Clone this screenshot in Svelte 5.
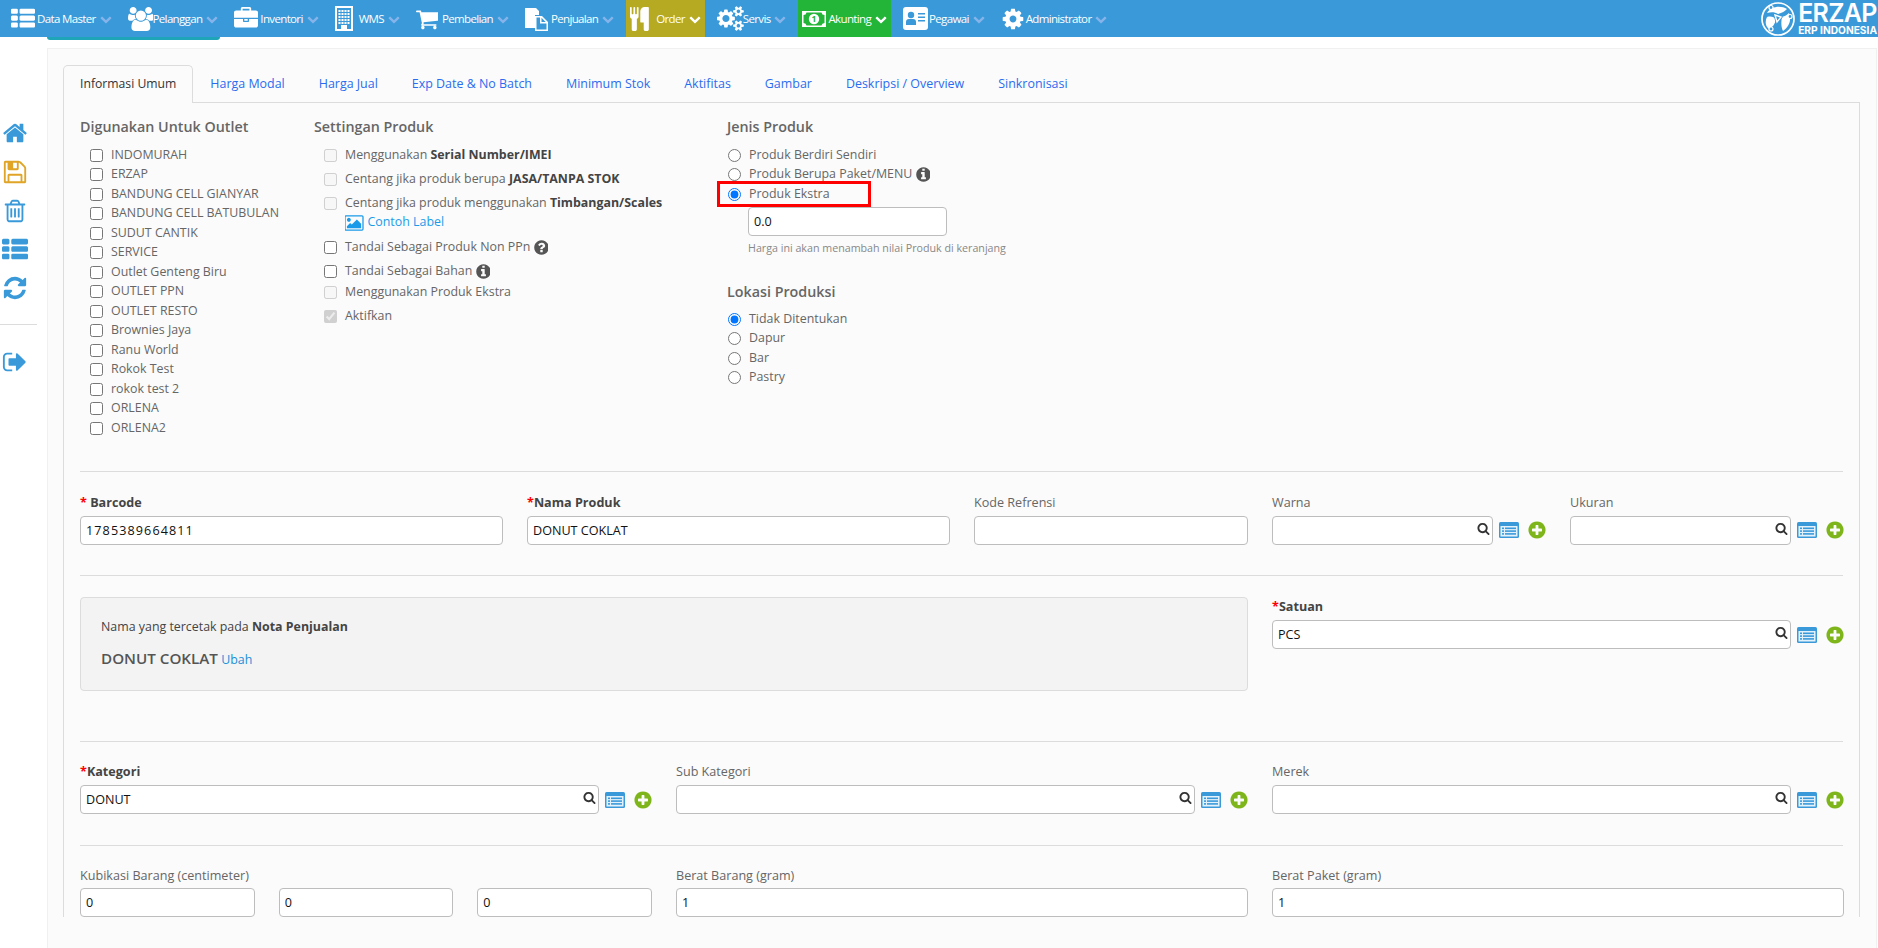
<script>
  const P = {
    users: ['0 0 1920 1792','M593 896q-162 5-265 128h-134q-82 0-138-40.5t-56-118.5q0-353 124-353 6 0 43.5 21t97.5 42.5 119 21.5q67 0 133-23-5 37-5 66 0 139 81 256zm1071 637q0 120-73 189.5t-194 69.5h-874q-121 0-194-69.5t-73-189.5q0-53 3.5-103.5t14-109 26.5-108.5 43-97.5 62-81 85.5-53.5 111.5-20q10 0 43 21.5t73 48 107 48 135 21.5 135-21.5 107-48 73-48 43-21.5q61 0 111.5 20t85.5 53.5 62 81 43 97.5 26.5 108.5 14 109 3.5 103.5zm-1024-1277q0 106-75 181t-181 75-181-75-75-181 75-181 181-75 181 75 75 181zm704 384q0 159-112.5 271.5t-271.5 112.5-271.5-112.5-112.5-271.5 112.5-271.5 271.5-112.5 271.5 112.5 112.5 271.5zm576 225q0 78-56 118.5t-138 40.5h-134q-103-123-265-128 81-117 81-256 0-29-5-66 66 23 133 23 59 0 119-21.5t97.5-42.5 43.5-21q124 0 124 353zm-128-609q0 106-75 181t-181 75-181-75-75-181 75-181 181-75 181 75 75 181z'],
    briefcase: ['0 0 1792 1792','M640 256h512v-128h-512v128zm1152 640v480q0 66-47 113t-113 47h-1472q-66 0-113-47t-47-113v-480h672v160q0 26 19 45t45 19h320q26 0 45-19t19-45v-160h672zm-768 0v128h-256v-128h256zm768-480v384h-1792v-384q0-66 47-113t113-47h352v-160q0-40 28-68t68-28h576q40 0 68 28t28 68v160h352q66 0 113 47t47 113z'],
    cart: ['0 0 1664 1792','M640 1536q0 52-38 90t-90 38-90-38-38-90 38-90 90-38 90 38 38 90zm896 0q0 52-38 90t-90 38-90-38-38-90 38-90 90-38 90 38 38 90zm128-1088v512q0 24-16.5 42.5t-40.5 21.5l-1044 122q13 60 13 70 0 16-24 64h920q26 0 45 19t19 45-19 45-45 19h-1024q-26 0-45-19t-19-45q0-11 8-31.5t16-36 21.5-40 15.5-29.5l-177-823h-204q-26 0-45-19t-19-45 19-45 45-19h256q16 0 28.5 6.5t19.5 15.5 13 24.5 8 26 5.5 29.5 4.5 26h1201q26 0 45 19t19 45z'],
    cutlery: ['0 0 1408 1792','M640 64v640q0 61-35.5 111t-92.5 70v779q0 52-38 90t-90 38h-128q-52 0-90-38t-38-90v-779q-57-20-92.5-70t-35.5-111v-640q0-26 19-45t45-19 45 19 19 45v416q0 26 19 45t45 19 45-19 19-45v-416q0-26 19-45t45-19 45 19 19 45v416q0 26 19 45t45 19 45-19 19-45v-416q0-26 19-45t45-19 45 19 19 45zm768 0v1600q0 52-38 90t-90 38h-128q-52 0-90-38t-38-90v-512h-224q-13 0-22.5-9.5t-9.5-22.5v-800q0-132 94-226t226-94h256q26 0 45 19t19 45z'],
    cogs: ['0 0 1920 1792','M896 896q0-106-75-181t-181-75-181 75-75 181 75 181 181 75 181-75 75-181zm768 512q0-52-38-90t-90-38-90 38-38 90q0 53 37.5 90.5t90.5 37.5 90.5-37.5 37.5-90.5zm0-1024q0-52-38-90t-90-38-90 38-38 90q0 53 37.5 90.5t90.5 37.5 90.5-37.5 37.5-90.5zm-384 421v185q0 10-7 19.5t-16 10.5l-155 24q-11 35-32 76 34 48 90 115 7 11 7 20 0 12-7 19-23 30-82.5 89.5t-78.5 59.5q-11 0-21-7l-115-90q-37 19-77 31-11 108-23 155-7 24-30 24h-186q-11 0-20-7.5t-10-17.5l-23-153q-34-10-75-31l-118 89q-7 7-20 7-11 0-21-8-144-133-144-160 0-9 7-19 10-14 41-53t47-61q-23-44-35-82l-152-24q-10-1-17-9.5t-7-19.5v-185q0-10 7-19.5t16-10.5l155-24q11-35 32-76-34-48-90-115-7-11-7-20 0-12 7-20 22-30 82-89t79-59q11 0 21 7l115 90q34-18 77-32 11-108 23-154 7-24 30-24h186q11 0 20 7.5t10 17.5l23 153q34 10 75 31l118-89q8-7 20-7 11 0 21 8 144 133 144 160 0 8-7 19-12 16-42 54t-45 60q23 48 34 82l152 23q10 2 17 10.5t7 19.5zm640 533v140q0 16-149 31-12 27-30 52 51 113 51 138 0 4-4 7-122 71-124 71-8 0-46-47t-52-68q-20 2-30 2t-30-2q-14 21-52 68t-46 47q-2 0-124-71-4-3-4-7 0-25 51-138-18-25-30-52-149-15-149-31v-140q0-16 149-31 13-29 30-52-51-113-51-138 0-4 4-7 4-2 35-20t59-34 30-16q8 0 46 46.5t52 67.5q20-2 30-2t30 2q51-71 92-112l6-2q4 0 124 70 4 3 4 7 0 25-51 138 17 23 30 52 149 15 149 31zm0-1024v140q0 16-149 31-12 27-30 52 51 113 51 138 0 4-4 7-122 71-124 71-8 0-46-47t-52-68q-20 2-30 2t-30-2q-14 21-52 68t-46 47q-2 0-124-71-4-3-4-7 0-25 51-138-18-25-30-52-149-15-149-31v-140q0-16 149-31 13-29 30-52-51-113-51-138 0-4 4-7 4-2 35-20t59-34 30-16q8 0 46 46.5t52 67.5q20-2 30-2t30 2q51-71 92-112l6-2q4 0 124 70 4 3 4 7 0 25-51 138 17 23 30 52 149 15 149 31z'],
    cog: ['0 0 1792 1792','M1152 896q0-106-75-181t-181-75-181 75-75 181 75 181 181 75 181-75 75-181zm512-109v222q0 12-8 23t-20 13l-185 28q-19 54-39 91 35 50 107 138 10 12 10 25t-9 23q-27 37-99 108t-94 71q-12 0-26-9l-138-108q-44 23-91 38-16 136-29 186-7 28-36 28h-222q-14 0-24.5-8.5t-11.5-21.5l-28-184q-49-16-90-37l-141 107q-10 9-25 9-14 0-25-11-126-114-165-168-7-10-7-23 0-12 8-23 15-21 51-66.5t54-70.5q-27-50-41-99l-183-27q-13-2-21-12.5t-8-23.5v-222q0-12 8-23t19-13l186-28q14-46 39-92-40-57-107-138-10-12-10-24 0-10 9-23 26-36 98.5-107.5t94.5-71.5q13 0 26 10l138 107q44-23 91-38 16-136 29-186 7-28 36-28h222q14 0 24.5 8.5t11.5 21.5l28 184q49 16 90 37l142-107q9-9 24-9 13 0 25 10 129 119 165 170 7 8 7 22 0 12-8 23-15 21-51 66.5t-54 70.5q26 50 41 98l183 28q13 2 21 12.5t8 23.5z'],
    chevron: ['0 0 1792 1792','M1683 808l-742 741q-19 19-45 19t-45-19l-742-741q-19-19-19-45.5t19-45.5l166-165q19-19 45-19t45 19l531 531 531-531q19-19 45-19t45 19l166 165q19 19 19 45.5t-19 45.5z'],
    home: ['0 0 1792 1792','M1472 992v480q0 26-19 45t-45 19h-384v-384h-256v384h-384q-26 0-45-19t-19-45v-480q0-1 .5-3t.5-3l575-474 575 474q1 2 1 6zm223-69l-62 74q-8 9-21 11h-3q-13 0-21-7l-692-577-692 577q-12 8-24 7-13-2-21-11l-62-74q-8-10-7-23.5t11-21.5l719-599q32-26 76-26t76 26l244 204v-195q0-14 9-23t23-9h192q14 0 23 9t9 23v408l219 182q10 8 11 21.5t-7 23.5z'],
    save: ['0 0 1792 1792','M512 1536h768v-384h-768v384zm896 0h128v-896q0-14-10-38.5t-20-34.5l-281-281q-10-10-34-20t-39-10v416q0 40-28 68t-68 28h-576q-40 0-68-28t-28-68v-416h-128v1280h128v-416q0-40 28-68t68-28h832q40 0 68 28t28 68v416zm-384-928v-320q0-13-9.5-22.5t-22.5-9.5h-192q-13 0-22.5 9.5t-9.5 22.5v320q0 13 9.5 22.5t22.5 9.5h192q13 0 22.5-9.5t9.5-22.5zm640 32v928q0 40-28 68t-68 28h-1344q-40 0-68-28t-28-68v-1344q0-40 28-68t68-28h928q40 0 88 20t76 48l280 280q28 28 48 76t20 88z'],
    trash: ['0 0 1792 1792','M704 736v576q0 14-9 23t-23 9h-64q-14 0-23-9t-9-23v-576q0-14 9-23t23-9h64q14 0 23 9t9 23zm256 0v576q0 14-9 23t-23 9h-64q-14 0-23-9t-9-23v-576q0-14 9-23t23-9h64q14 0 23 9t9 23zm256 0v576q0 14-9 23t-23 9h-64q-14 0-23-9t-9-23v-576q0-14 9-23t23-9h64q14 0 23 9t9 23zm128 724v-948h-896v948q0 22 7 40.5t14.5 27 10.5 8.5h832q3 0 10.5-8.5t14.5-27 7-40.5zm-672-1076h448l-48-117q-7-9-17-11h-317q-10 2-17 11zm928 32v64q0 14-9 23t-23 9h-96v948q0 83-47 143.5t-113 60.5h-832q-66 0-113-58.5t-47-141.5v-952h-96q-14 0-23-9t-9-23v-64q0-14 9-23t23-9h309l70-167q15-37 54-63t79-26h320q40 0 79 26t54 63l70 167h309q14 0 23 9t9 23z'],
    thlist: ['0 0 1792 1792','M512 1248v192q0 40-28 68t-68 28h-320q-40 0-68-28t-28-68v-192q0-40 28-68t68-28h320q40 0 68 28t28 68zm0-512v192q0 40-28 68t-68 28h-320q-40 0-68-28t-28-68v-192q0-40 28-68t68-28h320q40 0 68 28t28 68zm1280 512v192q0 40-28 68t-68 28h-960q-40 0-68-28t-28-68v-192q0-40 28-68t68-28h960q40 0 68 28t28 68zm-1280-1024v192q0 40-28 68t-68 28h-320q-40 0-68-28t-28-68v-192q0-40 28-68t68-28h320q40 0 68 28t28 68zm1280 512v192q0 40-28 68t-68 28h-960q-40 0-68-28t-28-68v-192q0-40 28-68t68-28h960q40 0 68 28t28 68zm0-512v192q0 40-28 68t-68 28h-960q-40 0-68-28t-28-68v-192q0-40 28-68t68-28h960q40 0 68 28t28 68z'],
    refresh: ['0 0 1792 1792','M1639 1056q0 5-1 7-64 268-268 434.5t-478 166.5q-146 0-282.5-55t-243.5-157l-129 129q-19 19-45 19t-45-19-19-45v-448q0-26 19-45t45-19h448q26 0 45 19t19 45-19 45l-137 137q71 66 161 102t187 36q134 0 250-65t186-179q11-17 53-117 8-23 30-23h192q13 0 22.5 9.5t9.5 22.5zm25-800v448q0 26-19 45t-45 19h-448q-26 0-45-19t-19-45 19-45l138-138q-148-137-349-137-134 0-250 65t-186 179q-11 17-53 117-8 23-30 23h-199q-13 0-22.5-9.5t-9.5-22.5v-7q65-268 270-434.5t480-166.5q146 0 284 55.5t245 156.5l130-129q19-19 45-19t45 19 19 45z'],
    signout: ['0 0 1664 1792','M704 1440q0 4 1 20t.5 26.5-3 23.5-10 19.5-20.5 6.5h-320q-119 0-203.5-84.5t-84.5-203.5v-704q0-119 84.5-203.5t203.5-84.5h320q13 0 22.5 9.5t9.5 22.5q0 4 1 20t.5 26.5-3 23.5-10 19.5-20.5 6.5h-320q-66 0-113 47t-47 113v704q0 66 47 113t113 47h312l11.5 1 11.5 3 8 5.5 7 9 2 13.5zm928-544q0 26-19 45l-544 544q-19 19-45 19t-45-19-19-45v-288h-448q-26 0-45-19t-19-45v-384q0-26 19-45t45-19h448v-288q0-26 19-45t45-19 45 19l544 544q19 19 19 45z'],
    search: ['0 0 1792 1792','M1216 832q0-185-131.5-316.5t-316.5-131.5-316.5 131.5-131.5 316.5 131.5 316.5 316.5 131.5 316.5-131.5 131.5-316.5zm512 832q0 52-38 90t-90 38q-54 0-90-38l-343-342q-179 124-399 124-143 0-273.5-55.5t-225-150-150-225-55.5-273.5 55.5-273.5 150-225 225-150 273.5-55.5 273.5 55.5 225 150 150 225 55.5 273.5q0 220-124 399l343 343q37 37 37 90z'],
    plus: ['0 0 1664 1792','M1344 960v-128q0-26-19-45t-45-19h-256v-256q0-26-19-45t-45-19h-128q-26 0-45 19t-19 45v256h-256q-26 0-45 19t-19 45v128q0 26 19 45t45 19h256v256q0 26 19 45t45 19h128q26 0 45-19t19-45v-256h256q26 0 45-19t19-45zm320-64q0 209-103 385.5t-279.5 279.5-385.5 103-385.5-103-279.5-279.5-103-385.5 103-385.5 279.5-279.5 385.5-103 385.5 103 279.5 279.5 103 385.5z'],
    info: ['0 0 1664 1792','M1152 1376v-160q0-14-9-23t-23-9h-96v-512q0-14-9-23t-23-9h-320q-14 0-23 9t-9 23v160q0 14 9 23t23 9h96v320h-96q-14 0-23 9t-9 23v160q0 14 9 23t23 9h448q14 0 23-9t9-23zm-128-896v-160q0-14-9-23t-23-9h-192q-14 0-23 9t-9 23v160q0 14 9 23t23 9h192q14 0 23-9t9-23zm640 416q0 209-103 385.5t-279.5 279.5-385.5 103-385.5-103-279.5-279.5-103-385.5 103-385.5 279.5-279.5 385.5-103 385.5 103 279.5 279.5 103 385.5z'],
    question: ['0 0 1664 1792','M1024 1376v-192q0-14-9-23t-23-9h-192q-14 0-23 9t-9 23v192q0 14 9 23t23 9h192q14 0 23-9t9-23zm256-672q0-88-55.5-163t-138.5-116-170-41q-243 0-371 213-15 24 8 42l132 100q7 6 19 6 16 0 25-12 53-68 86-92 34-24 86-24 48 0 85.5 26t37.5 59q0 38-20 61t-68 45q-63 28-115.5 86.5t-52.5 125.5v36q0 14 9 23t23 9h192q14 0 23-9t9-23q0-19 21.5-49.5t54.5-49.5q32-18 49-28.5t46-35 44.5-48 28-60.5 12.5-81zm384 192q0 209-103 385.5t-279.5 279.5-385.5 103-385.5-103-279.5-279.5-103-385.5 103-385.5 279.5-279.5 385.5-103 385.5 103 279.5 279.5 103 385.5z'],
    picture: ['0 0 1920 1792','M576 576q0 80-56 136t-136 56-136-56-56-136 56-136 136-56 136 56 56 136zm1024 384v448h-1408v-192l320-320 160 160 512-512zm96-704h-1600q-13 0-22.5 9.5t-9.5 22.5v1216q0 13 9.5 22.5t22.5 9.5h1600q13 0 22.5-9.5t9.5-22.5v-1216q0-13-9.5-22.5t-22.5-9.5zm160 32v1216q0 66-47 113t-113 47h-1600q-66 0-113-47t-47-113v-1216q0-66 47-113t113-47h1600q66 0 113 47t47 113z']
  };

  const nav = [
    { t:'Data Master', i:'thlist', w:26, s:24 },
    { t:'Pelanggan', i:'users', w:25, s:24 },
    { t:'Inventori', i:'briefcase', w:26, s:24 },
    { t:'WMS', i:'wms', w:24, s:24 },
    { t:'Pembelian', i:'cart', w:26, s:24 },
    { t:'Penjualan', i:'file', w:26, s:24 },
    { t:'Order', i:'cutlery', w:26, s:24, cls:'order' },
    { t:'Servis', i:'cogs', w:26, s:25 },
    { t:'Akunting', i:'money', w:26, s:24, cls:'akun' },
    { t:'Pegawai', i:'vcard', w:26, s:24 },
    { t:'Administrator', i:'cog', w:25, s:24 }
  ];
  const tabs = ['Harga Modal','Harga Jual','Exp Date & No Batch','Minimum Stok','Aktifitas','Gambar','Deskripsi / Overview','Sinkronisasi'];
  const outlets = ['INDOMURAH','ERZAP','BANDUNG CELL GIANYAR','BANDUNG CELL BATUBULAN','SUDUT CANTIK','SERVICE','Outlet Genteng Biru','OUTLET PPN','OUTLET RESTO','Brownies Jaya','Ranu World','Rokok Test','rokok test 2','ORLENA','ORLENA2'];
  const lokasi = ['Tidak Ditentukan','Dapur','Bar','Pastry'];
  const side = [['home','blue'],['save','amber'],['trash','blue'],['thlist','blue'],['refresh','blue']];
</script>

{#snippet fa(name, size, cls = '')}
  <svg class={cls} width={size * P[name][0].split(' ')[2] / 1792} height={size} viewBox={P[name][0]} fill="currentColor" aria-hidden="true"><path d={P[name][1]} /></svg>
{/snippet}

{#snippet addons()}
  <svg class="tbl" width="20" height="16" viewBox="0 0 20 16" aria-hidden="true">
    <rect x="0" y="0" width="20" height="16" rx="1.5" fill="#3a9ad9" />
    <rect x="1.5" y="4" width="17" height="10.5" fill="#e3f1fb" />
    <rect x="6" y="5.5" width="11" height="1.6" fill="#3a9ad9" /><rect x="6" y="8.3" width="11" height="1.6" fill="#3a9ad9" /><rect x="6" y="11.1" width="11" height="1.6" fill="#3a9ad9" />
    <rect x="3" y="5.5" width="2" height="1.6" fill="#3a9ad9" /><rect x="3" y="8.3" width="2" height="1.6" fill="#3a9ad9" /><rect x="3" y="11.1" width="2" height="1.6" fill="#3a9ad9" />
  </svg>
  <span class="add">{@render fa('plus', 20)}</span>
{/snippet}

{#snippet lookup(value = '')}
  <div class="lookup">
    <div class="sfield">
      <input class="ctl" type="text" {value} />
      <span class="mag">{@render fa('search', 13)}</span>
    </div>
    {@render addons()}
  </div>
{/snippet}

<div class="top">
  {#each nav as n}
    <div class="item {n.cls ?? ''}">
      <span class="ic" style:width="{n.w}px">
        {#if n.i === 'wms'}
          <svg width="18" height="25" viewBox="0 0 18 25" aria-hidden="true">
            <path fill="#fff" fill-rule="evenodd" d="M0 0h18v25H0zM2 2v21h4v-4h6v4h4V2z" />
            <g fill="#fff">
              {#each [3.5,6.5,9.5,12.5] as x}{#each [4,7,10,13,16] as y}<rect {x} {y} width="2" height="2" />{/each}{/each}
            </g>
          </svg>
        {:else if n.i === 'file'}
          <svg width="24" height="24" viewBox="0 0 24 24" aria-hidden="true">
            <path fill="#fff" d="M0 1h11l3 3v4h-4v13H0z" />
            <path fill="#fff" fill-rule="evenodd" d="M10 9h7l6 6v9H10zM11.5 10.5v12h10v-6h-6.5v-6zM16.5 10.8v4.2h4.2z" />
          </svg>
        {:else if n.i === 'money'}
          <svg width="24" height="16" viewBox="0 0 24 16" aria-hidden="true">
            <path fill="#fff" fill-rule="evenodd" d="M0 0h24v16H0zM1.5 4v8a3 3 0 0 1 3 2.5h15a3 3 0 0 1 3-2.5V4a3 3 0 0 1-3-2.5h-15A3 3 0 0 1 1.5 4z" />
            <circle cx="12" cy="8" r="5.2" fill="#fff" />
            <text x="12" y="11" text-anchor="middle" font-size="8.5" font-weight="700" fill="#22b538" font-family="Open Sans, sans-serif">1</text>
          </svg>
        {:else if n.i === 'vcard'}
          <svg width="25" height="23" viewBox="0 0 25 23" aria-hidden="true">
            <rect width="25" height="23" rx="3" fill="#fff" />
            <circle cx="8" cy="8" r="3.2" fill="#3a9ad9" />
            <path fill="#3a9ad9" d="M3 18v-3q0-3 3-3h4q3 0 3 3v3z" />
            <path fill="#3a9ad9" d="M15 6h7v1.6h-7zM15 9.5h7v1.6h-7zM15 13h7v1.6h-7z" />
          </svg>
        {:else}
          {@render fa(n.i, n.s)}
        {/if}
      </span>
      <span class="lbl">{n.t}</span>
      {@render fa('chevron', 12, 'chev')}
    </div>
  {/each}
  <div class="brand">
    <svg width="36" height="36" viewBox="0 0 36 36" aria-hidden="true">
      <circle cx="18" cy="18" r="16" fill="none" stroke="#fff" stroke-width="1.7" />
      <path fill="#fff" d="M7 12C11 5 21 4 27 8c-2 2-5 4-9 5-3-2-7-2-11-1zM29 12c3 7 0 14-6 18-2-4-2-9-1-14 3-1 5-2 7-4zM7 16c4-1 7 0 9 2-1 5-3 8-7 10-4-3-4-8-2-12z" />
      <path fill="#3a9ad9" d="M13 12l10 4-7 7z" />
      <path fill="none" stroke="#fff" stroke-width="1.4" d="M15 14l6 2-4 5z" />
      <g fill="#3a9ad9" stroke="#fff" stroke-width="1.2"><circle cx="11" cy="6.5" r="2" /><circle cx="30" cy="15.5" r="2" /><circle cx="11" cy="28" r="2" /></g>
    </svg>
    <div class="btxt"><span class="b1">ERZAP</span><span class="b2">ERP INDONESIA</span></div>
  </div>
</div>
<div class="accent"></div>

<div class="shell">
  <aside class="side">
    {#each side as [ic, c]}
      <div class="sb {c}">{@render fa(ic, 26)}</div>
    {/each}
    <hr class="sb-hr" />
    <div class="sb blue">{@render fa('signout', 26)}</div>
  </aside>

  <main class="card">
    <nav class="tabs">
      <span class="tab active">Informasi Umum</span>
      {#each tabs as t}<span class="tab">{t}</span>{/each}
    </nav>
    <div class="pane">
      <section class="top-grid">
        <div>
          <h4>Digunakan Untuk Outlet</h4>
          {#each outlets as o}
            <label class="chk"><input type="checkbox" />{o}</label>
          {/each}
        </div>
        <div>
          <h4>Settingan Produk</h4>
          <label class="chk wide"><input type="checkbox" disabled /><span>Menggunakan <b>Serial Number/IMEI</b></span></label>
          <label class="chk wide"><input type="checkbox" disabled /><span>Centang jika produk berupa <b>JASA/TANPA STOK</b></span></label>
          <label class="chk wide"><input type="checkbox" disabled /><span>Centang jika produk menggunakan <b>Timbangan/Scales</b><br /><a class="contoh">{@render fa('picture', 18)} Contoh Label</a></span></label>
          <label class="chk wide"><input type="checkbox" /><span>Tandai Sebagai Produk Non PPn {@render fa('question', 17, 'tip')}</span></label>
          <label class="chk wide tight"><input type="checkbox" /><span>Tandai Sebagai Bahan {@render fa('info', 17, 'tip')}</span></label>
          <label class="chk wide mid"><input type="checkbox" disabled /><span>Menggunakan Produk Ekstra</span></label>
          <label class="chk wide"><input type="checkbox" disabled checked /><span>Aktifkan</span></label>
        </div>
        <div>
          <h4>Jenis Produk</h4>
          <label class="rad"><input type="radio" name="j" />Produk Berdiri Sendiri</label>
          <label class="rad"><input type="radio" name="j" /><span>Produk Berupa Paket/MENU {@render fa('info', 17, 'tip')}</span></label>
          <label class="rad flag"><input type="radio" name="j" checked />Produk Ekstra<i class="redbox"></i></label>
          <input class="ctl extra" type="text" value="0.0" />
          <p class="help">Harga ini akan menambah nilai Produk di keranjang</p>
          <h4 class="lok">Lokasi Produksi</h4>
          {#each lokasi as l, i}
            <label class="rad"><input type="radio" name="l" checked={i === 0} />{l}</label>
          {/each}
        </div>
      </section>

      <hr class="first" />
      <section class="g snug">
        <div class="s3"><label class="lab"><b><em>*</em> Barcode</b></label><input class="ctl digits" type="text" value="1785389664811" /></div>
        <div class="s3"><label class="lab"><b><em>*</em>Nama Produk</b></label><input class="ctl" type="text" value="DONUT COKLAT" /></div>
        <div class="s2"><label class="lab">Kode Refrensi</label><input class="ctl" type="text" /></div>
        <div class="s2"><label class="lab">Warna</label>{@render lookup()}</div>
        <div class="s2"><label class="lab">Ukuran</label>{@render lookup()}</div>
      </section>

      <hr class="before-note" />
      <section class="g">
        <div class="s8 note">
          <p>Nama yang tercetak pada <b>Nota Penjualan</b></p>
          <p class="nm"><strong>DONUT COKLAT</strong> <a>Ubah</a></p>
        </div>
        <div class="s4"><label class="lab"><b><em>*</em>Satuan</b></label>{@render lookup('PCS')}</div>
      </section>

      <hr class="after-note" />
      <section class="g">
        <div class="s4"><label class="lab"><b><em>*</em>Kategori</b></label>{@render lookup('DONUT')}</div>
        <div class="s4"><label class="lab">Sub Kategori</label>{@render lookup()}</div>
        <div class="s4"><label class="lab">Merek</label>{@render lookup()}</div>
      </section>

      <hr class="last" />
      <section class="g snugger">
        <div class="s4">
          <label class="lab">Kubikasi Barang (centimeter)</label>
          <div class="tri">
            <input class="ctl" type="text" value="0" /><input class="ctl" type="text" value="0" /><input class="ctl" type="text" value="0" />
          </div>
        </div>
        <div class="s4"><label class="lab">Berat Barang (gram)</label><input class="ctl" type="text" value="1" /></div>
        <div class="s4"><label class="lab">Berat Paket (gram)</label><input class="ctl" type="text" value="1" /></div>
      </section>
    </div>
  </main>
</div>

<style>
  :global(html), :global(body) { margin: 0; height: 948px; overflow: hidden; background: #fff; }
  :global(body) { font-family: "Open Sans", "Noto Sans", sans-serif; font-size: 12.4px; line-height: 19.5px; color: #666; }
  svg { display: inline-block; vertical-align: middle; flex: none; }

  .top { height: 37px; background: #3a9ad9; display: flex; align-items: stretch; padding-left: 7px; color: #fff; }
  .item { display: flex; align-items: center; padding: 0 4px; margin-right: 8px; height: 37px; }
  .item .ic { display: flex; align-items: center; flex: none; height: 37px; }
  .item .lbl { font-size: 11.5px; letter-spacing: -0.65px; white-space: nowrap; margin-right: 4px; }
  .item :global(.chev) { color: #86b4ea; }
  .order { background: #b5aa22; }
  .akun { background: #22b538; }
  .order :global(.chev), .akun :global(.chev) { color: #fff; }
  .brand { margin-left: auto; display: flex; align-items: center; gap: 2px; padding-right: 1px; height: 37px; }
  .btxt { display: flex; flex-direction: column; line-height: 1; }
  .b1 { font-family: Inter, sans-serif; font-weight: 600; font-size: 25px; line-height: 23px; letter-spacing: -0.7px; }
  .b2 { font-family: Inter, sans-serif; font-weight: 700; font-size: 10.2px; line-height: 11px; letter-spacing: 0; white-space: nowrap; }

  .accent { width: 173px; height: 3px; margin-left: 47px; background: #1ea5b8; border-radius: 0 0 3px 3px; }

  .shell { display: flex; padding-top: 8px; }
  .side { width: 47px; flex: none; padding-top: 66px; color: #3a9ad9; }
  .sb { width: 29px; height: 38.75px; display: flex; align-items: center; justify-content: center; }
  .sb.amber { color: #e0a526; }
  .sb.blue { color: #3a9ad9; }
  .sb-hr { width: 37px; margin: 16px 0 18px; }

  .card { flex: 1; min-height: 900px; margin-right: 1px; padding: 16px 16px 16px 15px; background: #fbfbfb; border-top: 1px solid #f0f0f0; border-left: 1px solid #f0f0f0; border-right: 1px solid #f0f0f0; box-sizing: border-box; min-width: 0; }
  .tabs { display: flex; height: 37px; position: relative; z-index: 1; }
  .tab { padding: 0 16px; border: 1px solid transparent; border-bottom: 0; font-size: 12.45px; line-height: 36px; color: #2a6cf0; white-space: nowrap; }
  .tab.active { color: #333; background: #fbfbfb; border-color: #dcdcdc; border-radius: 5px 5px 0 0; height: 38px; box-sizing: border-box; font-size: 12.2px; }

  .pane { border: 1px solid #dcdcdc; border-bottom: 0; padding: 13px 16px 0; margin-top: 0; }
  h4 { margin: 0 0 6px; font-size: 14.3px; font-weight: 600; line-height: 22.5px; color: #666; }

  .top-grid { display: grid; grid-template-columns: 234px 413px 1fr; height: 355px; }
  .chk, .rad { display: flex; align-items: flex-start; padding-left: 10px; white-space: nowrap; }
  .chk input { margin: 4px 8px 0 0; flex: none; width: 13px; height: 13px; }
  .chk.wide { margin-bottom: 4.7px; }
  .chk.wide input { margin-right: 8px; }
  .chk.tight { margin-bottom: 1.5px; }
  .chk.mid { margin-bottom: 4.6px; }
  .rad { padding-left: 1px; }
  .rad input { margin: 4px 8px 0 0; flex: none; width: 13px; height: 13px; }
  .flag { position: relative; }
  .redbox { position: absolute; left: -10px; top: -3px; width: 154px; height: 26px; border: 3px solid #f00; box-sizing: border-box; }
  b { color: #444; font-weight: 700; }
  .contoh { color: #1a9bea; display: inline-block; }
  :global(.tip) { color: #555; vertical-align: -3px; margin-left: -1px; }
  input.extra { display: block; width: 199px; margin: 4px 0 0 21px; }
  .help { margin: 4px 0 0 21px; font-size: 10.7px; line-height: 17px; color: #888; white-space: nowrap; }
  .lok { margin: 24px 0 5px; }

  hr { border: 0; border-top: 1px solid #dcdcdc; margin: 30px 0 20px; }
  hr.first { margin: 0 0 21px; }
  hr.before-note { margin-bottom: 21px; }
  hr.after-note { margin-top: 50px; }
  hr.last { margin-top: 31px; }

  .g { display: grid; grid-template-columns: repeat(12, 125px); column-gap: 24px; }
  .s2 { grid-column: span 2; } .s3 { grid-column: span 3; } .s4 { grid-column: span 4; } .s8 { grid-column: span 8; }
  .lab { display: block; margin-bottom: 4px; color: #666; font-size: 12.6px; }
  .snug .lab { margin-bottom: 3px; }
  .snugger .lab { margin-bottom: 2.5px; }
  .lab b { color: #444; }
  em { color: #f00; font-style: normal; }
  .ctl { display: block; width: 100%; height: 29px; box-sizing: border-box; border: 1px solid #bdbdbd; border-radius: 4px; background: #fff; padding: 0 5px; font: 12.6px "Open Sans", sans-serif; color: #111; outline: 0; }
  .digits { letter-spacing: 1.1px; }
  .lookup { display: flex; align-items: center; }
  .sfield { position: relative; flex: 1; min-width: 0; }
  .mag { position: absolute; right: 3px; top: 6px; color: #333; line-height: 0; }
  .tbl { margin-left: 6px; }
  .add { margin-left: 8px; color: #7db51a; display: flex; }
  .add svg { display: block; }
  .tri { display: grid; grid-template-columns: repeat(3, 1fr); column-gap: 24px; }

  .note { height: 94px; box-sizing: border-box; background: #f3f3f3; border: 1px solid #dcdcdc; border-radius: 4px; padding: 19px 20px 0; }
  .note p { margin: 0; color: #444; }
  .note .nm { margin-top: 13px; }
  .note strong { font-size: 15.2px; font-weight: 600; color: #555; }
  .note a { color: #1a8fd8; font-size: 12.4px; }
</style>
